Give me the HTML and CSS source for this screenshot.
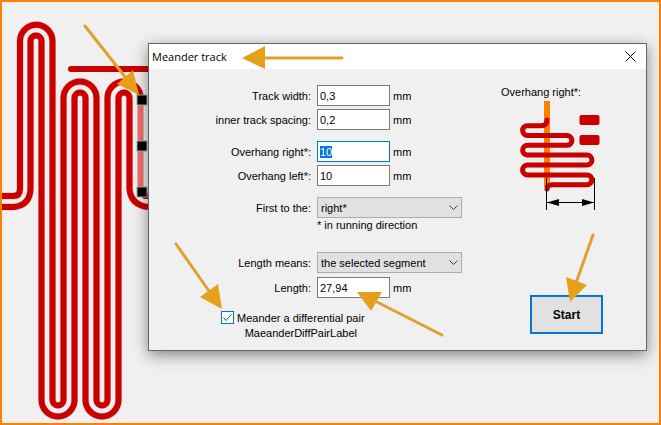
FILE: index.html
```html
<!DOCTYPE html>
<html lang="en">
<head>
  <meta charset="UTF-8">
  <title>Meander track</title>
  <link rel="stylesheet" href="styles.css">
</head>
<body>
  <svg class="board" width="661" height="425" viewBox="0 0 661 425" aria-hidden="true">
    <defs>
      <path id="outer" d="M0 196 H13 Q20 196 20 189 V41 A16 16 0 0 1 52.500 41 V400 A5.500 5.500 0 0 0 63.500 400 V98 A16 16 0 0 1 96.500 98 V400 A5.500 5.500 0 0 0 107.500 400 V98 A16 16 0 0 1 140.500 98" />
      <path id="inner" d="M0 207 H14 Q30 205 30.500 189 V41 A5.500 5.500 0 0 1 41.500 41 V400 A16 16 0 0 0 74.500 400 V98 A5.500 5.500 0 0 1 85.500 98 V400 A16 16 0 0 0 118.500 400 V98 A5.500 5.500 0 0 1 129.500 98 V189 Q131 205 148 207" />
    </defs>
    <use href="#outer" class="track-halo" />
    <use href="#inner" class="track-halo" />
    <use href="#outer" class="track" />
    <use href="#inner" class="track" />
    <path class="track round" d="M71 69 H160 M145 196 H160" />
    <path class="segment" d="M140.500 100 V192" />
    <rect class="handle" x="137" y="95" width="10" height="10" />
    <rect class="handle" x="137" y="141" width="10" height="10" />
    <rect class="handle" x="137" y="187" width="10" height="10" />
  </svg>

  <main class="dialog">
    <header class="titlebar">
      <h1>Meander track</h1>
      <button class="close" aria-label="Close">
        <svg width="11" height="11" viewBox="0 0 11 11"><path d="M.5 .5 L10.500 10.500 M10.500 .5 L.5 10.500" /></svg>
      </button>
    </header>

    <form class="content">
      <div class="fields">
        <div class="group">
          <label for="trackWidth">Track width:</label>
          <div class="value"><input type="text" id="trackWidth" value="0,3"> mm</div>
          <label for="spacing">inner track spacing:</label>
          <div class="value"><input type="text" id="spacing" value="0,2"> mm</div>
        </div>

        <div class="group">
          <label for="overRight">Overhang right*:</label>
          <div class="value"><input type="text" id="overRight" value="10"> mm</div>
          <label for="overLeft">Overhang left*:</label>
          <div class="value"><input type="text" id="overLeft" value="10"> mm</div>
        </div>

        <div class="group direction">
          <label for="first">First to the:</label>
          <div class="dropdown">
            <select id="first"><option>right*</option><option>left*</option></select>
            <svg class="chevron" width="9" height="6" viewBox="0 0 9 6"><path d="M.5 .5 L4.500 4.500 L8.500 .5" /></svg>
          </div>
          <p class="hint">* in running direction</p>
        </div>

        <div class="group length">
          <label for="means">Length means:</label>
          <div class="dropdown">
            <select id="means"><option>the selected segment</option></select>
            <svg class="chevron" width="9" height="6" viewBox="0 0 9 6"><path d="M.5 .5 L4.500 4.500 L8.500 .5" /></svg>
          </div>
          <label for="length">Length:</label>
          <div class="value"><input type="text" id="length" value="27,94"> mm</div>
        </div>

        <div class="pair">
          <span class="tick">
            <input type="checkbox" id="pair" checked>
            <svg width="13" height="13" viewBox="0 0 13 13"><path d="M2.500 6.500 L5 9.500 L10.500 3.500" /></svg>
          </span>
          <label for="pair">Meander a differential pair<br>MaeanderDiffPairLabel</label>
        </div>
      </div>

      <div class="side">
        <p class="caption">Overhang right*:</p>
        <svg class="preview" width="102" height="113" viewBox="0 0 102 113" aria-hidden="true">
          <rect class="run" x="43" y="2" width="6" height="86" />
          <path class="loop" d="M46 21 Q46 26.700 40 26.700 H26.500 A4.900 4.900 0 0 0 26.500 36.500 H66 A4.900 4.900 0 0 1 66 46.300 H26.500 A4.900 4.900 0 0 0 26.500 56.100 H86 A4.900 4.900 0 0 1 86 66 H26.500 A4.900 4.900 0 0 0 26.500 75.900 H86 A4.900 4.900 0 0 1 86 85.700 H51 Q46 85.700 46 90" />
          <rect class="pad" x="78.500" y="16" width="20" height="10" rx="2" />
          <rect class="pad" x="78.500" y="36" width="20" height="10" rx="2" />
          <path class="dim" d="M45.500 79 V111 M93.500 79 V111 M46 103.500 H93" />
          <path class="dim-head" d="M46 103.500 L58 100 V107 Z M93 103.500 L81 100 V107 Z" />
        </svg>
        <button type="button" class="start">Start</button>
      </div>
    </form>
  </main>

  <svg class="arrows" width="661" height="425" viewBox="0 0 661 425" aria-hidden="true">
    <path d="M85 26 L126 78 M342 58 H262 M176 244 L209 291 M593 235 L576 283 M442 335 L375 301" />
    <polygon points="139,95 133,70 117,84" />
    <polygon points="242,58 265,46 265,69" />
    <polygon points="222,309 218,284 200,297" />
    <polygon points="570,302 566,277 587,285" />
    <polygon points="357,292 382,292 371,311" />
  </svg>

  <script>
    const field = document.getElementById('overRight');
    field.focus();
    field.select();
  </script>
</body>
</html>
```
FILE: styles.css
```css
* {
  box-sizing: border-box;
}

body {
  position: relative;
  margin: 0;
  min-height: 100vh;
  padding: 41px 12px 20px 146px;
  border: 2px solid #ff8000;
  background: #f0f0f0;
  color: #000;
  font: 11px/14px "Liberation Sans", Arial, sans-serif;
  overflow: hidden;
}

h1, p {
  margin: 0;
  font-size: 11px;
  font-weight: normal;
}

/* board behind the dialog */
.board, .arrows {
  position: absolute;
  top: -2px;
  left: -2px;
  fill: none;
}

/* keep the frame above the track ends */
.board {
  clip-path: inset(2px);
}

.track {
  stroke: #c80000;
  stroke-width: 6;
}

.track-halo {
  stroke: #ff9c9c;
  stroke-width: 7;
  opacity: 0.7;
}

.round {
  stroke-linecap: round;
}

.segment {
  stroke: #f06c6c;
  stroke-width: 6;
}

.handle {
  fill: #000;
  stroke: #a8b0a8;
}

.dialog {
  position: relative;
  border: 1px solid #666;
  background: #f0f0f0;
  box-shadow: 0 4px 14px rgba(0,0,0,0.45);
}

.titlebar {
  display: flex;
  justify-content: space-between;
  align-items: center;
  height: 25px;
  padding: 0 10px 0 3px;
  background: #fff;
}

.titlebar h1 {
  font-family: "Open Sans", "Noto Sans", sans-serif;
}

.close {
  display: flex;
  padding: 0;
  border: none;
  background: none;
}

.close path {
  stroke: #000;
}

.content {
  display: flex;
  justify-content: space-between;
  padding: 16px 43px 9px 0;
}

.fields {
  display: flex;
  flex-direction: column;
  gap: 11px;
}

.group {
  display: grid;
  grid-template-columns: 162px 145px;
  gap: 3px 6px;
  align-items: center;
}

.group label {
  text-align: right;
}

.direction {
  row-gap: 0;
}

.length {
  row-gap: 4px;
  margin-top: 9px;
}

.value {
  display: flex;
  align-items: center;
  gap: 3px;
}

input, select, button {
  font: inherit;
  color: #000;
}

.value input {
  width: 73px;
  height: 21px;
  padding: 0 2px;
  border: 1px solid #7a7a7a;
  background: #fff;
  outline: none;
}

.value input:focus {
  border-color: #0078d7;
}

.value input::selection {
  background: #0078d7;
  color: #fff;
}

.dropdown {
  position: relative;
}

.dropdown select {
  display: block;
  width: 100%;
  height: 21px;
  padding: 0 3px;
  border: 1px solid #adadad;
  border-radius: 0;
  background: #e1e1e1;
  appearance: none;
}

.chevron {
  position: absolute;
  top: 8px;
  right: 4px;
  fill: none;
  stroke: #444;
  pointer-events: none;
}

.hint {
  grid-column: 2;
}

.pair {
  display: flex;
  gap: 3px;
  margin-top: 2px;
  padding-left: 72px;
  line-height: 15px;
  text-align: center;
}

.tick {
  position: relative;
  height: 13px;
}

.tick input {
  display: block;
  width: 13px;
  height: 13px;
  margin: 0;
  border: 1px solid #0078d7;
  background: #fff;
  appearance: none;
}

.tick svg {
  position: absolute;
  top: 0;
  left: 0;
  fill: none;
  stroke: #0067b8;
  pointer-events: none;
}

.tick input:not(:checked) + svg {
  display: none;
}

.side {
  display: flex;
  flex-direction: column;
  width: 102px;
  padding-bottom: 7px;
}

.run {
  fill: #ff8000;
}

.loop {
  fill: none;
  stroke: #c80000;
  stroke-width: 5;
  stroke-linecap: round;
}

.pad {
  fill: #c80000;
}

.dim {
  stroke: #000;
}

.start {
  align-self: flex-end;
  width: 73px;
  height: 39px;
  margin-top: auto;
  border: 2px solid #0078d7;
  background: #e1e1e1;
  font-size: 12px;
  font-weight: bold;
}

/* callout arrows */
.arrows {
  stroke: #e0a030;
  stroke-width: 3;
  stroke-linecap: round;
  pointer-events: none;
}

.arrows polygon {
  fill: #e8a01c;
  stroke: none;
}
```
